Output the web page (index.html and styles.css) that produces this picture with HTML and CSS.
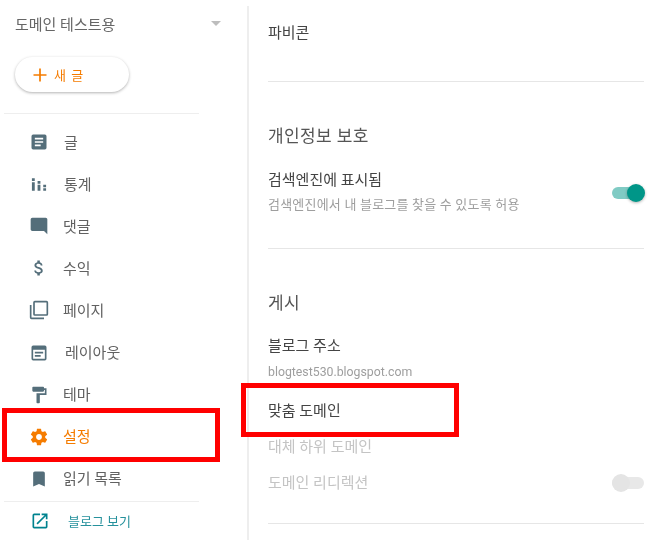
FILE: index.html
```html
<!DOCTYPE html>
<html lang="ko">
<head>
<meta charset="utf-8">
<title>설정</title>
<link rel="stylesheet" href="styles.css">
</head>
<body>
<div class="page">
  <aside class="sidebar">
    <div class="blog-select">
      <span class="blog-name">도메인 테스트용</span>
      <span class="caret"></span>
    </div>
    <button class="new-post">
      <svg class="plus" viewBox="0 0 14 14"><path d="M7 0.5v13M0.5 7h13"/></svg>
      <span>새 글</span>
    </button>
    <hr class="side-rule">
    <nav class="nav">
      <a class="nav-item"><span class="ico"><svg viewBox="0 0 24 24"><path d="M19 3H5a2 2 0 0 0-2 2v14a2 2 0 0 0 2 2h14a2 2 0 0 0 2-2V5a2 2 0 0 0-2-2zm-5 14H7v-2h7v2zm3-4H7v-2h10v2zm0-4H7V7h10v2z"/></svg></span><span class="txt gap1">글</span></a>
      <a class="nav-item"><span class="ico"><svg viewBox="0 0 24 24"><path d="M3.5 10h3.4v10H3.5zM3.5 5h3.4v3.4H3.5zM10.3 13h3.4v7h-3.4zM10.3 8.5h3.4v3.2h-3.4zM17.1 17h3.4v3h-3.4zM17.1 13h3.4v2.8h-3.4z"/></svg></span><span class="txt gap1">통계</span></a>
      <a class="nav-item"><span class="ico"><svg viewBox="0 0 24 24"><path d="M21.99 4c0-1.1-.89-2-1.99-2H4c-1.1 0-2 .9-2 2v12c0 1.1.9 2 2 2h14l4 4-.01-18z"/></svg></span><span class="txt">댓글</span></a>
      <a class="nav-item"><span class="ico"><svg viewBox="0 0 24 24"><path d="M11.8 10.9c-2.27-.59-3-1.2-3-2.15 0-1.09 1.01-1.85 2.7-1.85 1.78 0 2.44.85 2.5 2.1h2.21c-.07-1.72-1.12-3.3-3.21-3.81V3h-3v2.16c-1.94.42-3.5 1.68-3.5 3.61 0 2.31 1.91 3.46 4.7 4.13 2.5.6 3 1.48 3 2.41 0 .69-.49 1.79-2.7 1.79-2.06 0-2.87-.92-2.98-2.1h-2.2c.12 2.19 1.76 3.42 3.68 3.83V21h3v-2.15c1.95-.37 3.5-1.5 3.5-3.55 0-2.84-2.43-3.81-4.7-4.4z"/></svg></span><span class="txt">수익</span></a>
      <a class="nav-item"><span class="ico"><svg viewBox="0 0 24 24"><path d="M3 6H1v15a2 2 0 0 0 2 2h15v-2H3V6zm18-5H7a2 2 0 0 0-2 2v14a2 2 0 0 0 2 2h14a2 2 0 0 0 2-2V3a2 2 0 0 0-2-2zm0 16H7V3h14v14z"/></svg></span><span class="txt">페이지</span></a>
      <a class="nav-item"><span class="ico"><svg viewBox="0 0 24 24"><path d="M19 3H5a2 2 0 0 0-2 2v14a2 2 0 0 0 2 2h14a2 2 0 0 0 2-2V5a2 2 0 0 0-2-2zm0 16H5V8h14v11zM7 10.5h10v2H7zM7 14.5h7v2H7z"/></svg></span><span class="txt gap2">레이아웃</span></a>
      <a class="nav-item"><span class="ico"><svg viewBox="0 0 24 24"><path d="M18 4V3c0-.55-.45-1-1-1H5c-.55 0-1 .45-1 1v4c0 .55.45 1 1 1h12c.55 0 1-.45 1-1V6h1v4H9v11c0 .55.45 1 1 1h2c.55 0 1-.45 1-1v-9h8V4h-3z"/></svg></span><span class="txt">테마</span></a>
      <a class="nav-item active"><span class="ico"><svg viewBox="0 0 24 24"><path d="M19.43 12.98c.04-.32.07-.64.07-.98s-.03-.66-.07-.98l2.11-1.65c.19-.15.24-.42.12-.64l-2-3.46c-.12-.22-.39-.3-.61-.22l-2.49 1c-.52-.4-1.08-.73-1.69-.98l-.38-2.65A.488.488 0 0 0 14 2h-4c-.25 0-.46.18-.49.42l-.38 2.65c-.61.25-1.17.59-1.69.98l-2.49-1c-.23-.09-.49 0-.61.22l-2 3.46c-.13.22-.07.49.12.64l2.11 1.65c-.04.32-.07.65-.07.98s.03.66.07.98l-2.11 1.65c-.19.15-.24.42-.12.64l2 3.46c.12.22.39.3.61.22l2.49-1c.52.4 1.08.73 1.69.98l.38 2.65c.03.24.24.42.49.42h4c.25 0 .46-.18.49-.42l.38-2.65c.61-.25 1.17-.59 1.69-.98l2.49 1c.23.09.49 0 .61-.22l2-3.46c.12-.22.07-.49-.12-.64l-2.11-1.65zM12 15.5c-1.93 0-3.5-1.57-3.5-3.5s1.57-3.5 3.5-3.5 3.5 1.57 3.5 3.5-1.57 3.5-3.5 3.5z"/></svg></span><span class="txt">설정</span></a>
      <a class="nav-item"><span class="ico"><svg viewBox="0 0 24 24"><path d="M17 3H7c-1.1 0-2 .9-2 2v16l7-3 7 3V5c0-1.1-.9-2-2-2z"/></svg></span><span class="txt">읽기 목록</span></a>
    </nav>
    <hr class="side-rule foot-rule">
    <a class="view-blog"><span class="ico teal"><svg viewBox="0 0 24 24"><path d="M19 19H5V5h7V3H5a2 2 0 0 0-2 2v14a2 2 0 0 0 2 2h14a2 2 0 0 0 2-2v-7h-2v7zM14 3v2h3.59l-9.83 9.83 1.41 1.41L19 6.41V10h2V3h-7z"/></svg></span><span>블로그 보기</span></a>
  </aside>

  <main class="content">
    <section class="sec sec-favicon">
      <div class="label">파비콘</div>
    </section>
    <section class="sec sec-privacy">
      <h2 class="heading">개인정보 보호</h2>
      <div class="row">
        <div>
          <div class="label">검색엔진에 표시됨</div>
          <div class="sub">검색엔진에서 내 블로그를 찾을 수 있도록 허용</div>
        </div>
        <span class="toggle on"><span class="knob"></span></span>
      </div>
    </section>
    <section class="sec sec-publish">
      <h2 class="heading">게시</h2>
      <div class="label addr">블로그 주소</div>
      <div class="url">blogtest530.blogspot.com</div>
      <div class="label custom">맞춤 도메인</div>
      <div class="label off alt">대체 하위 도메인</div>
      <div class="row redirect">
        <div class="label off">도메인 리디렉션</div>
        <span class="toggle"><span class="knob"></span></span>
      </div>
    </section>
  </main>
</div>
<div class="mark mark-nav"></div>
<div class="mark mark-domain"></div>
</body>
</html>
```
FILE: styles.css
```css
* { box-sizing: border-box; }
html, body { margin: 0; padding: 0; background: #fff; }
body {
  width: 658px;
  height: 540px;
  overflow: hidden;
  position: relative;
  font-family: Roboto, "Noto Sans CJK KR", sans-serif;
  color: #555;
}
.page { display: flex; height: 540px; padding-top: 6px; filter: blur(0.45px); }

.sidebar { width: 247px; flex: none; margin-top: -6px; }
.blog-select {
  display: flex;
  align-items: center;
  justify-content: space-between;
  width: 206px;
  height: 20px;
  margin: 13px 0 0 15px;
  font-size: 15px;
  color: #666;
}
.caret {
  width: 0; height: 0;
  border-left: 5px solid transparent;
  border-right: 5px solid transparent;
  border-top: 5px solid #bdbdbd;
}
.new-post {
  display: flex;
  align-items: center;
  gap: 7px;
  width: 114px;
  height: 35px;
  margin: 24px 0 0 15px;
  padding: 0 0 0 18px;
  background: #fff;
  border: 0;
  border-radius: 18px;
  box-shadow: 0 1px 3px rgba(0,0,0,.3);
  color: #f57c00;
  font: 13px Roboto, "Noto Sans CJK KR", sans-serif;
  letter-spacing: 1px;
}
.plus { width: 14px; height: 14px; fill: none; stroke: #f57c00; stroke-width: 1.7; }
.side-rule { width: 195px; height: 1px; margin: 21px 0 0 4px; border: 0; background: #eee; }
.foot-rule { margin-top: 1px; }

.nav { display: flex; flex-direction: column; margin-top: 7px; }
.nav-item {
  display: flex;
  align-items: center;
  gap: 14px;
  height: 42.1px;
  padding-left: 29px;
  font-size: 15px;
  color: #616161;
}
.txt { padding-bottom: 2px; }
.ico { width: 20px; height: 20px; flex: none; }
.ico svg { display: block; width: 20px; height: 20px; fill: #546e7a; }
.gap1 { margin-left: 1px; }
.gap2 { margin-left: 2px; }
.active { color: #f57c00; }
.active .ico svg { fill: #f57c00; }
.view-blog {
  display: flex;
  align-items: center;
  gap: 18px;
  height: 38px;
  padding-left: 30px;
  font-size: 13px;
  color: #26919c;
}
.teal svg { fill: #00838f; }

.content {
  width: 397px;
  flex: none;
  padding: 0 0 0 19px;
  border-left: 2px solid #eee;
  height: 534px;
}
.sec { border-bottom: 1px solid #e6e6e6; }
.sec-favicon { height: 76px; padding-top: 17px; }
.sec-privacy { height: 167px; padding-top: 43px; }
.sec-publish { height: 275px; padding-top: 43px; }
.heading { margin: 0; font-size: 17px; line-height: 22px; font-weight: 400; color: #555; letter-spacing: 0.4px; }
.label { font-size: 15px; line-height: 20px; color: #444; }
.sub { margin-top: 5px; font-size: 13px; line-height: 20px; color: #9e9e9e; letter-spacing: 0.2px; }
.row { display: flex; align-items: center; justify-content: space-between; }
.sec-privacy .row { margin-top: 23px; }
.url { margin-top: 6px; font-size: 12.3px; line-height: 20px; color: #9e9e9e; }
.addr { margin-top: 22px; }
.custom { margin-top: 19px; }
.alt { margin-top: 16px; }
.redirect { margin-top: 16px; }
.off { color: #c4c4c4; }

.toggle { position: relative; display: block; width: 32px; height: 12px; border-radius: 6px; background: #e8e8e8; }
.on { background: #80cbc4; }
.knob {
  position: absolute;
  top: -3px;
  left: 0;
  width: 18px;
  height: 18px;
  border-radius: 50%;
  background: #e4e4e4;
}
.on .knob { left: 15px; background: #009688; box-shadow: 0 1px 3px rgba(0,0,0,.3); }

.mark { position: absolute; border: 5px solid #f00; }
.mark-nav { left: 2px; top: 408px; width: 218px; height: 54px; }
.mark-domain { left: 241px; top: 383px; width: 218px; height: 54px; }
```
